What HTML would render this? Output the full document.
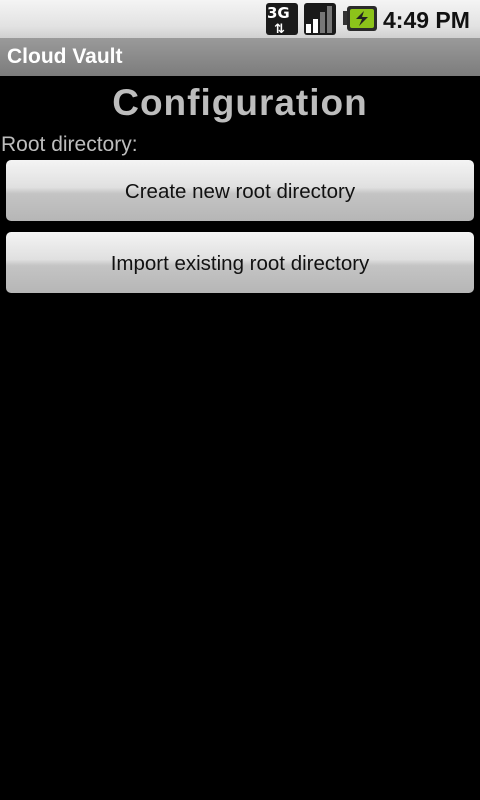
<!DOCTYPE html>
<html><head><style>
body{margin:0;width:480px;height:800px;background:#000;font-family:"Liberation Sans","DejaVu Sans",sans-serif;overflow:hidden;position:relative}
.sb{position:absolute;top:0;left:0;width:480px;height:38px;background:linear-gradient(#f4f4f4,#e2e2e2 70%,#d0d0d0)}
.tb{position:absolute;top:38px;left:0;width:480px;height:38px;background:linear-gradient(#9a9a9a,#7c7c7c)}
.tb span{position:absolute;left:7px;top:7px;color:#fff;font-weight:bold;font-size:21px}
h1{position:absolute;top:82px;left:0;width:480px;text-align:center;margin:0;color:#bdbdbd;font-size:37px;font-weight:bold;letter-spacing:1px}
.lbl{position:absolute;top:133px;left:1px;color:#bdbdbd;font-size:21px}
.btn{position:absolute;left:6px;width:468px;height:61px;border-radius:5px;background:linear-gradient(#f4f4f4,#e0e0e0 45%,#c4c4c4 55%,#b6b6b6);color:#111;font-size:20.5px;text-align:center;line-height:63px}
</style></head><body>
<div class="sb">
<svg width="480" height="38" style="position:absolute;left:0;top:0">
<rect x="266" y="3" width="32" height="32" rx="3" fill="#1a1a1a"/>
<text x="267" y="18" fill="#fff" font-size="15" font-weight="bold" font-family="DejaVu Sans">3G</text>
<text x="274" y="33" fill="#fff" font-size="13" font-weight="bold" font-family="DejaVu Sans">⇅</text>
<rect x="304" y="3" width="32" height="32" rx="3" fill="#1a1a1a"/>
<rect x="306" y="24" width="5" height="9" fill="#fff"/>
<rect x="313" y="19" width="5" height="14" fill="#fff"/>
<rect x="320" y="12" width="5" height="21" fill="#777"/>
<rect x="327" y="6" width="5" height="27" fill="#777"/>
<rect x="343" y="11" width="4" height="14" fill="#333"/>
<rect x="347" y="6" width="30" height="25" rx="3" fill="#2a2a2a"/>
<rect x="350" y="9" width="24" height="19" rx="2" fill="#8cc31a"/>
<path d="M364 11 L356 19 H362 L359 26 L368 17 H362 Z" fill="#222"/>
<text x="383" y="28" fill="#111" font-size="23" font-weight="bold" font-family="Liberation Sans">4:49 PM</text>
</svg>
</div>
<div class="tb"><span>Cloud Vault</span></div>
<h1>Configuration</h1>
<div class="lbl">Root directory:</div>
<div class="btn" style="top:160px">Create new root directory</div>
<div class="btn" style="top:232px">Import existing root directory</div>
</body></html>
